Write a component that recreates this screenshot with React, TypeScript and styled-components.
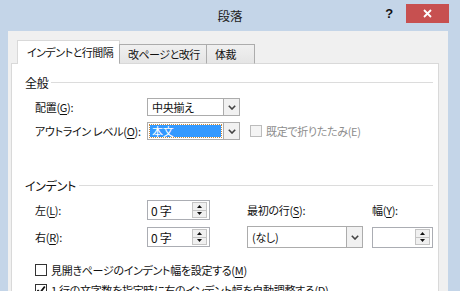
import React from 'react';
import styled, { createGlobalStyle } from 'styled-components';

const GlobalStyle = createGlobalStyle`
  html, body {
    margin: 0;
    padding: 0;
  }
  body {
    font-family: "Noto Sans CJK JP", "Noto Sans", sans-serif;
    font-size: 11px;
    letter-spacing: -0.3px;
    color: #111;
    font-feature-settings: "palt";
    background: #c4d5e8;
  }
  u {
    text-underline-offset: 2px;
  }
`;

const Window = styled.div`
  width: 460px;
  height: 291px;
  overflow: hidden;
  background: #c4d5e8;
  display: flex;
  flex-direction: column;
`;

const TitleBar = styled.div`
  height: 31px;
  flex-shrink: 0;
  display: grid;
  grid-template-columns: 1fr auto 1fr;
`;

const Title = styled.div`
  align-self: center;
  font-size: 12.5px;
  letter-spacing: 0;
  color: #222;
`;

const TitleButtons = styled.div`
  display: flex;
  justify-content: flex-end;
  align-items: flex-start;
  padding-right: 11px;
`;

const HelpButton = styled.div`
  margin-top: 4px;
  width: 16px;
  height: 19px;
  margin-right: 9px;
  display: flex;
  align-items: center;
  justify-content: center;
  font-family: "Liberation Sans", sans-serif;
  font-weight: bold;
  font-size: 13px;
  color: #111;
`;

const CloseButton = styled.div`
  margin-top: 4px;
  width: 43px;
  height: 19px;
  background: #c75050;
  display: flex;
  align-items: center;
  justify-content: center;
`;

const Body = styled.div`
  flex: 1;
  margin: 0 12px 0 8px;
  padding: 9px 9px 0 3px;
  background: #f0f0f0;
  display: flex;
  flex-direction: column;
  min-height: 0;
`;

const Tabs = styled.div`
  display: flex;
  align-items: flex-end;
  height: 24px;
  padding-left: 6px;
  margin-bottom: -1px;
  position: relative;
  z-index: 1;
`;

const Tab = styled.div<{ $active?: boolean; $w: number }>`
  width: ${(p) => p.$w}px;
  box-sizing: border-box;
  height: ${(p) => (p.$active ? 24 : 20)}px;
  padding-left: ${(p) => (p.$active ? 9 : 8)}px;
  display: flex;
  align-items: center;
  font-size: 11px;
  letter-spacing: -0.5px;
  background: ${(p) => (p.$active ? '#fff' : 'linear-gradient(#f0f0f0, #e5e5e5)')};
  border: 1px solid ${(p) => (p.$active ? '#d9d9d9' : '#acacac')};
  border-bottom: ${(p) => (p.$active ? 'none' : '1px solid #d9d9d9')};
  margin-left: ${(p) => (p.$active ? 0 : -1)}px;
  padding-bottom: ${(p) => (p.$active ? 1 : 0)}px;
  white-space: nowrap;
  overflow: hidden;
`;

const Panel = styled.div`
  flex: 1;
  background: #fff;
  border: 1px solid #d9d9d9;
  border-bottom: none;
  padding: 10px 5px 0 13px;
  overflow: hidden;
`;

const SectionHead = styled.div<{ $mt?: number }>`
  display: flex;
  align-items: center;
  height: 16px;
  font-size: 12px;
  margin-top: ${(p) => p.$mt ?? 0}px;
  &::after {
    content: '';
    flex: 1;
    height: 1px;
    background: #dcdcdc;
    margin-left: 3px;
  }
`;

const FormGrid = styled.div<{ $cols: string; $mt: number }>`
  display: grid;
  grid-template-columns: ${(p) => p.$cols};
  row-gap: 6px;
  align-items: center;
  margin-top: ${(p) => p.$mt}px;
  padding-left: 10px;
`;

const Label = styled.div<{ $muted?: boolean }>`
  white-space: nowrap;
  color: ${(p) => (p.$muted ? '#8d8d8d' : '#111')};
`;

const Select = styled.div<{ $h: number }>`
  height: ${(p) => p.$h}px;
  box-sizing: border-box;
  border: 1px solid #acacac;
  background: #fff;
  display: flex;
  align-items: stretch;
`;

const SelectValue = styled.div<{ $selected?: boolean }>`
  flex: 1;
  margin: 2px;
  padding-left: 2px;
  display: flex;
  align-items: center;
  color: ${(p) => (p.$selected ? '#fff' : '#111')};
  background: ${(p) => (p.$selected ? '#3399ff' : 'transparent')};
  outline: ${(p) => (p.$selected ? '1px dotted #c98a3c' : 'none')};
`;

const SelectArrow = styled.div`
  width: 15px;
  border-left: 1px solid #acacac;
  background: #f1f1f1;
  display: flex;
  align-items: center;
  justify-content: center;
`;

const Spin = styled.div<{ $h: number }>`
  height: ${(p) => p.$h}px;
  box-sizing: border-box;
  border: 1px solid #abadb3;
  background: #fff;
  display: flex;
  align-items: center;
  padding: 0 2px 0 3px;
`;

const SpinValue = styled.div`
  flex: 1;
  white-space: nowrap;
  font-size: 12px;
`;

const SpinButtons = styled.div`
  width: 13px;
  height: 14px;
  border: 1px solid #c4c4c4;
  background: #f0f0f0;
  display: flex;
  flex-direction: column;
`;

const SpinHalf = styled.div<{ $top?: boolean }>`
  flex: 1;
  display: flex;
  align-items: center;
  justify-content: center;
  border-bottom: ${(p) => (p.$top ? '1px solid #c4c4c4' : 'none')};
`;

const CheckRow = styled.div<{ $mt: number; $ml?: number }>`
  display: flex;
  align-items: center;
  gap: 4px;
  height: 16px;
  margin-top: ${(p) => p.$mt}px;
  margin-left: ${(p) => p.$ml ?? 0}px;
  white-space: nowrap;
`;

const CheckList = styled.div`
  padding-left: 10px;
`;

const CheckBox = styled.div<{ $disabled?: boolean }>`
  width: 12px;
  height: 12px;
  box-sizing: border-box;
  border: 1px solid ${(p) => (p.$disabled ? '#bcbcbc' : '#333')};
  background: ${(p) => (p.$disabled ? '#f4f4f4' : '#fff')};
  display: flex;
  align-items: center;
  justify-content: center;
  flex-shrink: 0;
`;

const Chevron = () => (
  <svg width="8" height="5" viewBox="0 0 8 5">
    <path d="M0.8 0.8 L4 4 L7.2 0.8" fill="none" stroke="#444" strokeWidth="1.6" />
  </svg>
);

const Tri = ({ up }: { up?: boolean }) => (
  <svg width="5" height="3" viewBox="0 0 5 3">
    <path d={up ? 'M0 3 L2.5 0 L5 3 Z' : 'M0 0 L2.5 3 L5 0 Z'} fill="#111" />
  </svg>
);

const SpinBox = ({ value, h }: { value: string; h: number }) => (
  <Spin $h={h}>
    <SpinValue>{value}</SpinValue>
    <SpinButtons>
      <SpinHalf $top>
        <Tri up />
      </SpinHalf>
      <SpinHalf>
        <Tri />
      </SpinHalf>
    </SpinButtons>
  </Spin>
);

const Dropdown = ({ value, h, selected }: { value: string; h: number; selected?: boolean }) => (
  <Select $h={h}>
    <SelectValue $selected={selected}>{value}</SelectValue>
    <SelectArrow>
      <Chevron />
    </SelectArrow>
  </Select>
);

export default function App() {
  return (
    <>
      <GlobalStyle />
      <Window>
        <TitleBar>
          <div />
          <Title>段落</Title>
          <TitleButtons>
            <HelpButton>?</HelpButton>
            <CloseButton>
              <svg width="9" height="9" viewBox="0 0 9 9">
                <path d="M1 1 L8 8 M8 1 L1 8" stroke="#fff" strokeWidth="1.8" />
              </svg>
            </CloseButton>
          </TitleButtons>
        </TitleBar>
        <Body>
          <Tabs>
            <Tab $active $w={103}>インデントと行間隔</Tab>
            <Tab $w={88}>改ページと改行</Tab>
            <Tab $w={49}>体裁</Tab>
          </Tabs>
          <Panel>
            <SectionHead>全般</SectionHead>
            <FormGrid $cols="112px 93px auto" $mt={8}>
              <Label>
                配置(<u>G</u>):
              </Label>
              <Dropdown value="中央揃え" h={18} />
              <div />
              <Label>
                アウトライン レベル(<u>O</u>):
              </Label>
              <Dropdown value="本文" h={18} selected />
              <CheckRow $mt={0} $ml={10}>
                <CheckBox $disabled />
                <Label $muted>既定で折りたたみ(E)</Label>
              </CheckRow>
            </FormGrid>
            <SectionHead $mt={37}>インデント</SectionHead>
            <FormGrid $cols="112px 63px 37px 116px 9px 61px" $mt={7}>
              <Label>
                左(<u>L</u>):
              </Label>
              <SpinBox value="0 字" h={20} />
              <div />
              <Label>
                最初の行(<u>S</u>):
              </Label>
              <div />
              <Label>
                幅(<u>Y</u>):
              </Label>
              <Label>
                右(<u>R</u>):
              </Label>
              <SpinBox value="0 字" h={20} />
              <div />
              <Dropdown value="(なし)" h={22} />
              <div />
              <SpinBox value="" h={21} />
            </FormGrid>
            <CheckList>
              <CheckRow $mt={14}>
                <CheckBox />
                <Label>
                  見開きページのインデント幅を設定する(<u>M</u>)
                </Label>
              </CheckRow>
              <CheckRow $mt={4}>
                <CheckBox>
                  <svg width="10" height="10" viewBox="0 0 10 10">
                    <path d="M1.5 5 L4 7.8 L8.8 1.5" fill="none" stroke="#111" strokeWidth="1.8" />
                  </svg>
                </CheckBox>
                <Label>1 行の文字数を指定時に右のインデント幅を自動調整する(<u>D</u>)</Label>
              </CheckRow>
            </CheckList>
          </Panel>
        </Body>
      </Window>
    </>
  );
}
